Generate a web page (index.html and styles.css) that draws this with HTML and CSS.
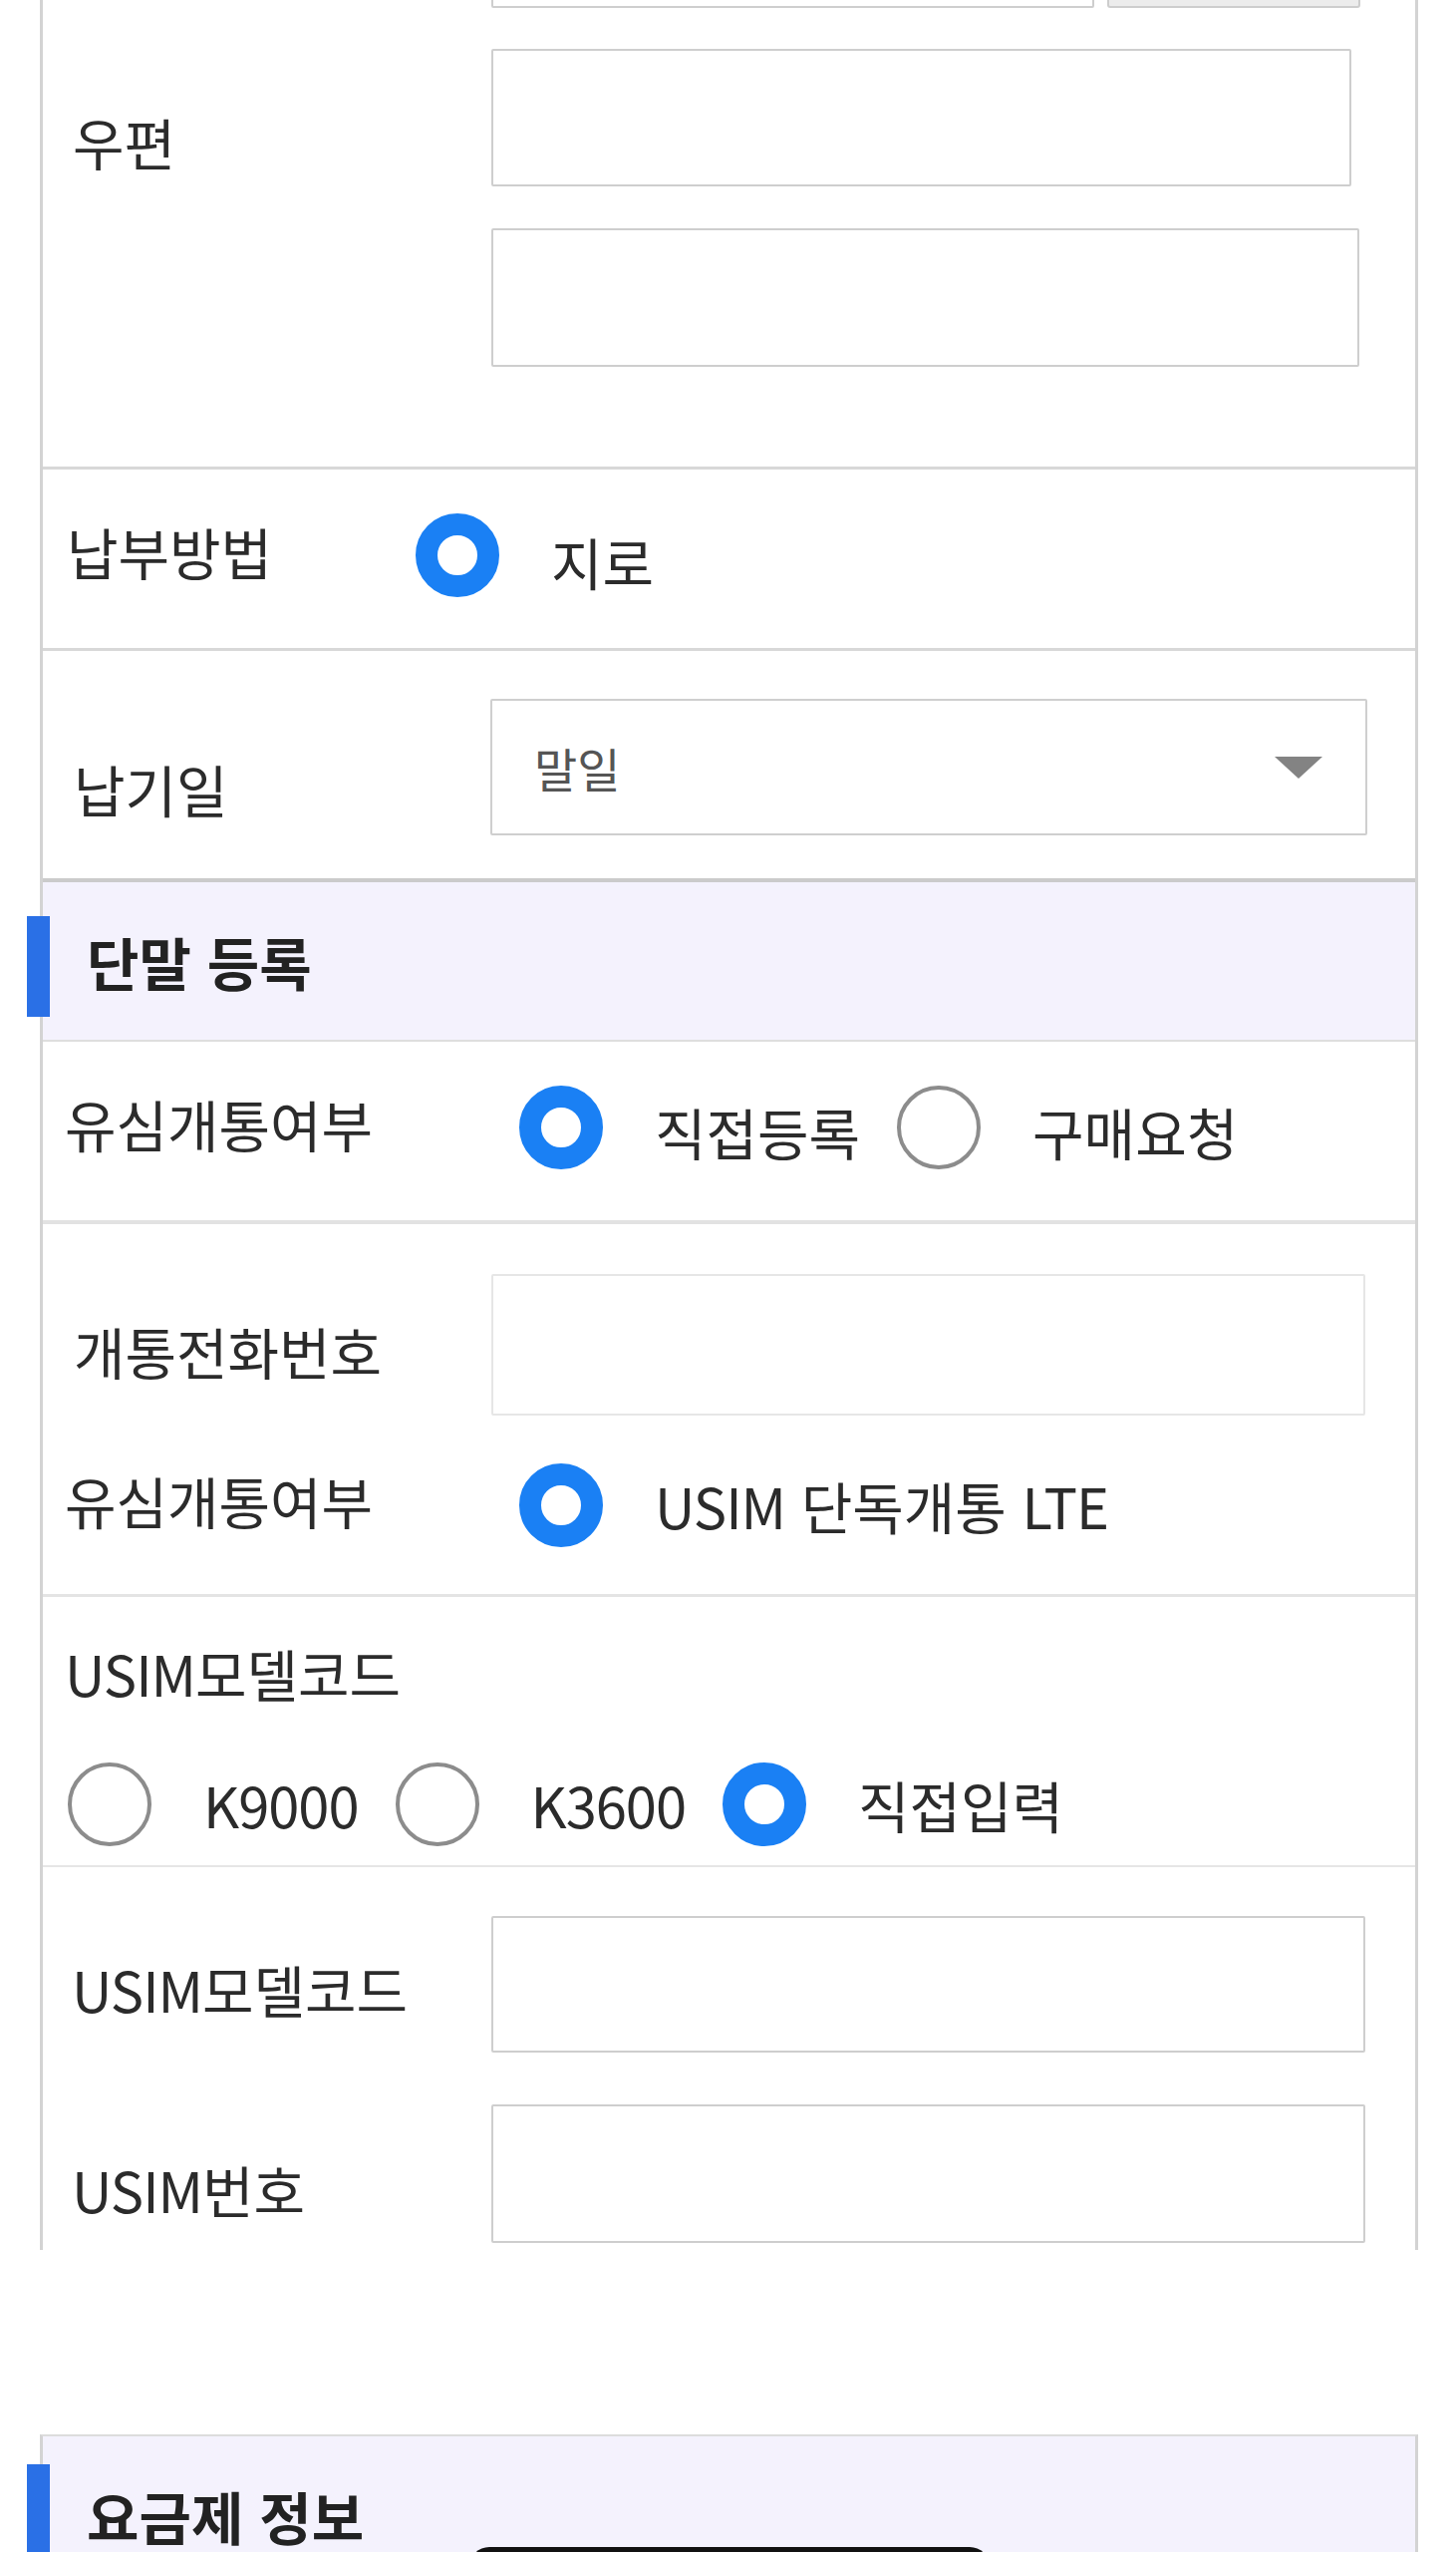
FILE: index.html
```html
<!DOCTYPE html>
<html lang="ko">
<head>
<meta charset="utf-8">
<title>가입 신청</title>
<link rel="stylesheet" href="styles.css">
</head>
<body>
<div class="panel">
  <div class="addr-top">
    <div class="input addr-in"></div>
    <div class="btn-gray"></div>
  </div>

  <div class="row row-post">
    <div class="label lab-post">우편</div>
    <div class="post-fields">
      <div class="input in-p1"></div>
      <div class="input in-p2"></div>
    </div>
  </div>

  <div class="row row-pay">
    <div class="label lab-pay">납부방법</div>
    <span class="radio on nudge-up"></span>
    <span class="opt-text first pay-text">지로</span>
  </div>

  <div class="row row-due">
    <div class="label lab-due">납기일</div>
    <div class="select">
      <span class="select-val">말일</span>
      <span class="caret"></span>
    </div>
  </div>

  <div class="sec-head">
    <span class="sec-bar"></span>
    <span class="sec-title">단말 등록</span>
  </div>

  <div class="row row-usim1">
    <div class="label lab-wide lab-up">유심개통여부</div>
    <span class="radio on nudge-up"></span>
    <span class="opt-text first">직접등록</span>
    <span class="radio off next nudge-up"></span>
    <span class="opt-text first">구매요청</span>
  </div>

  <div class="block-phone">
    <div class="sub sub-phone">
      <div class="label lab-col lab-phone">개통전화번호</div>
      <div class="input light in-phone"></div>
    </div>
    <div class="sub sub-usim2">
      <div class="label lab-wide lab-up2">유심개통여부</div>
      <span class="radio on"></span>
      <span class="opt-text first"><span class="lat">USIM</span> 단독개통 <span class="lat">LTE</span></span>
    </div>
  </div>

  <div class="block-model">
    <div class="label lab-model"><span class="lat">USIM</span>모델코드</div>
    <div class="model-opts">
      <span class="radio off"></span>
      <span class="opt-text first lat">K9000</span>
      <span class="radio off next"></span>
      <span class="opt-text first lat">K3600</span>
      <span class="radio on next"></span>
      <span class="opt-text first">직접입력</span>
    </div>
  </div>

  <div class="block-usim">
    <div class="sub sub-code">
      <div class="label lab-col lab-code"><span class="lat">USIM</span>모델코드</div>
      <div class="input in-code"></div>
    </div>
    <div class="sub sub-num">
      <div class="label lab-col lab-num"><span class="lat">USIM</span>번호</div>
      <div class="input in-num"></div>
    </div>
  </div>
</div>

<div class="panel panel2">
  <div class="sec-head sec-head2">
    <span class="sec-bar sec-bar2"></span>
    <span class="sec-title">요금제 정보</span>
  </div>
</div>

<div class="toast"></div>
</body>
</html>
```

FILE: styles.css
```css
* {
  box-sizing: border-box;
}

body {
  margin: 0;
  background: #ffffff;
  font-family: "Noto Sans CJK KR", "Noto Sans", sans-serif;
  color: #2b2b2b;
  position: relative;
}

.panel {
  margin-left: 40px;
  width: 1383px;
  border-left: 3px solid #d3d3d3;
  border-right: 3px solid #d3d3d3;
  background: #fff;
}

/* generic pieces */
.label {
  font-size: 56px;
  line-height: 1;
  flex: none;
  white-space: nowrap;
  color: #2b2b2b;
}

.lat {
  letter-spacing: -1px;
}

.input {
  flex: none;
  background: #fff;
  border: 2px solid #cecece;
  border-radius: 2px;
}

.input.light {
  border-color: #e6e6e6;
}

.radio {
  flex: none;
  display: block;
  width: 84px;
  height: 84px;
  border-radius: 50%;
  background: #fff;
}

.radio.on {
  border: 22px solid #1a80f4;
}

.radio.off {
  border: 4px solid #8c8c8c;
}

.radio.next {
  margin-left: 37px;
}

.opt-text {
  font-size: 56px;
  line-height: 1;
  white-space: nowrap;
  color: #2b2b2b;
}

.opt-text.first {
  margin-left: 52px;
}

.row {
  display: flex;
  align-items: center;
  border-bottom: 3px solid #d8d8d8;
}

/* partial address row at top */
.addr-top {
  height: 8px;
  display: flex;
  align-items: flex-end;
  gap: 13px;
  padding-left: 450px;
  overflow: hidden;
}

.addr-in {
  width: 605px;
  height: 80px;
}

.btn-gray {
  flex: none;
  width: 254px;
  height: 80px;
  background: #ececec;
  border: 2px solid #cdcdcd;
  border-radius: 3px;
}

/* 우편 */
.row-post {
  align-items: flex-start;
}

.lab-post {
  width: 450px;
  padding-left: 30px;
  padding-top: 106px;
}

.post-fields {
  display: flex;
  flex-direction: column;
  gap: 42px;
  padding-top: 41px;
  padding-bottom: 100px;
}

.in-p1 {
  width: 863px;
  height: 138px;
}

.in-p2 {
  width: 871px;
  height: 139px;
}

/* 납부방법 */
.row-pay {
  height: 182px;
}

.lab-pay {
  width: 374px;
  padding-left: 24px;
  margin-bottom: 15px;
}

.nudge-up {
  margin-bottom: 7px;
}

.pay-text {
  margin-left: 49px;
  margin-top: 5px;
}

/* 납기일 */
.row-due {
  align-items: flex-start;
  height: 232px;
  border-bottom: 4px solid #cbcbcb;
}

.lab-due {
  width: 449px;
  padding-left: 31px;
  margin-top: 110px;
}

.select {
  margin-top: 48px;
  width: 880px;
  height: 137px;
  display: flex;
  align-items: center;
  padding-left: 42px;
  border: 2px solid #cfcfcf;
  border-radius: 2px;
  background: #fff;
}

.select-val {
  font-size: 47px;
  line-height: 1;
  color: #555;
}

.caret {
  margin-left: auto;
  margin-right: 43px;
  width: 0;
  height: 0;
  border-left: 24px solid transparent;
  border-right: 24px solid transparent;
  border-top: 22px solid #838383;
}

/* section header */
.sec-head {
  position: relative;
  height: 160px;
  display: flex;
  align-items: center;
  padding-left: 44px;
  background: #f4f2fd;
  border-bottom: 2px solid #dedede;
}

.sec-bar {
  position: absolute;
  left: -16px;
  top: 34px;
  width: 23px;
  height: 101px;
  background: #2a70e6;
}

.sec-title {
  font-size: 57px;
  line-height: 1;
  font-weight: 700;
  color: #222;
  white-space: nowrap;
}

/* 유심개통여부 */
.row-usim1 {
  height: 183px;
  border-bottom: 4px solid #e2e2e2;
}

.lab-wide {
  width: 478px;
  padding-left: 22px;
}

.lab-up {
  margin-bottom: 15px;
}

.lab-up2 {
  margin-bottom: 10px;
}

/* 개통전화번호 block */
.block-phone {
  border-bottom: 3px solid #e4e4e4;
}

.sub {
  display: flex;
  align-items: center;
}

.sub-phone {
  padding-top: 50px;
}

.lab-col {
  width: 450px;
  padding-left: 31px;
}

.lab-phone {
  margin-top: 12px;
}

.in-phone {
  width: 877px;
  height: 142px;
}

.sub-usim2 {
  height: 179px;
}

/* USIM모델코드 radio block */
.block-model {
  padding-top: 48px;
  padding-bottom: 19px;
  border-bottom: 2px solid #e6e6e6;
}

.lab-model {
  padding-left: 22px;
}

.model-opts {
  display: flex;
  align-items: center;
  margin-top: 62px;
  padding-left: 25px;
}

/* USIM inputs block */
.block-usim {
  padding-top: 49px;
  padding-bottom: 7px;
}

.lab-code {
  padding-left: 29px;
  margin-top: 8px;
}

.lab-num {
  padding-left: 29px;
  margin-top: 30px;
}

.in-code {
  width: 877px;
  height: 137px;
}

.sub-num {
  margin-top: 52px;
}

.in-num {
  width: 877px;
  height: 139px;
}

/* second panel */
.panel2 {
  margin-top: 185px;
  border-top: 2px solid #dcdcdc;
}

.sec-head2 {
  border-bottom: none;
  height: 158px;
}

.sec-bar2 {
  top: 28px;
}

.toast {
  position: absolute;
  left: 471px;
  top: 2555px;
  width: 522px;
  height: 40px;
  background: #111;
  border-radius: 20px 20px 0 0;
}
```
